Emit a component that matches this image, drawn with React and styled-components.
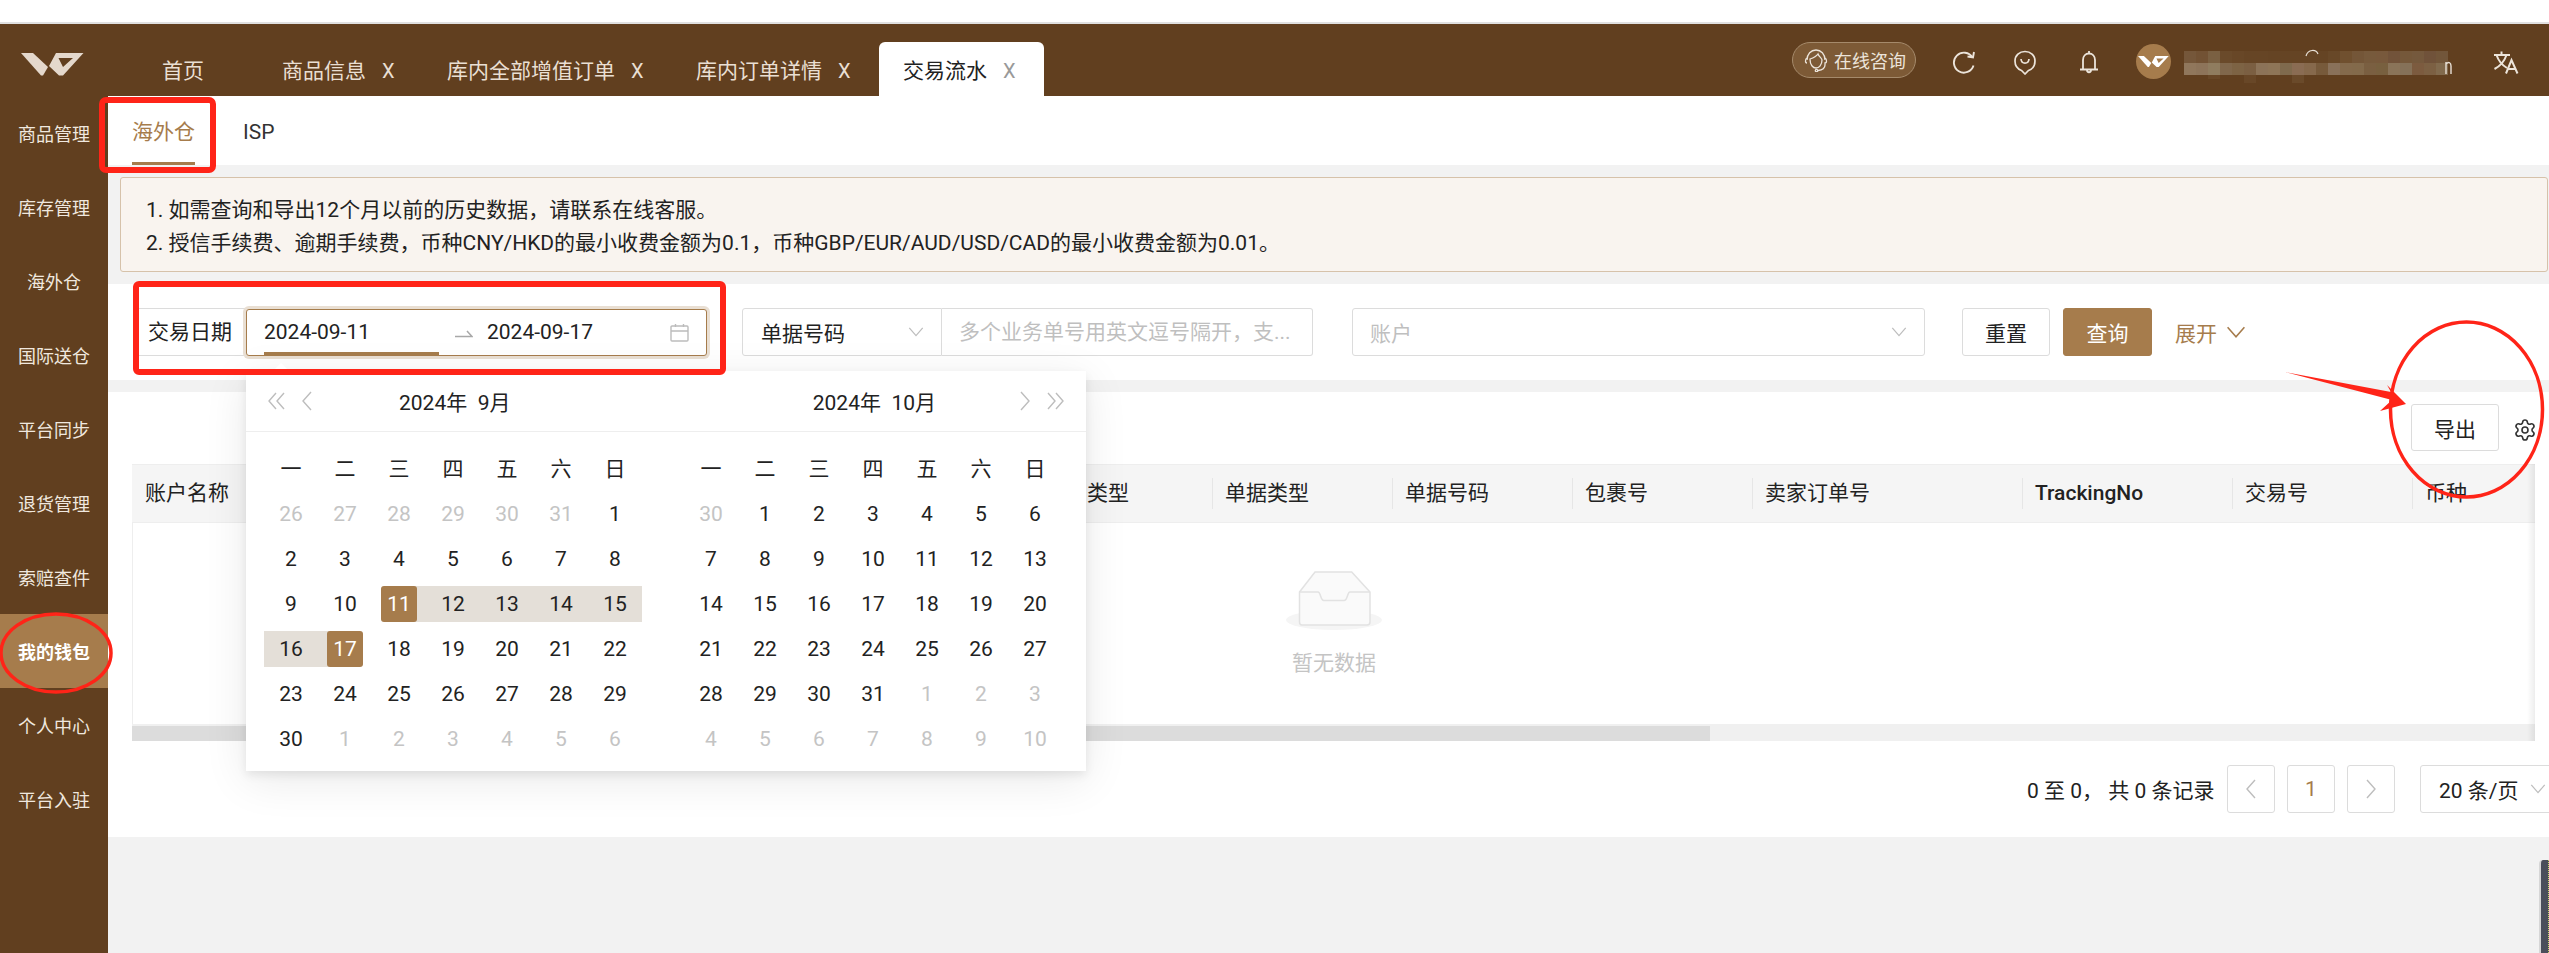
import React from 'react';
import styled, { createGlobalStyle } from 'styled-components';
import { Settings } from 'lucide-react';

const BROWN = '#613f1f';
const ACCENT = '#a67c4c';
const ICON = '#ece4da';
const FONT = 'Roboto, "Noto Sans CJK SC", sans-serif';

const GlobalStyle = createGlobalStyle`
    html, body { margin: 0; padding: 0; background: #fff; }
    * { box-sizing: border-box; }
    body { font-family: ${FONT}; font-size: 21px; color: #222; }
`;

const TABS = [
    { name: '首页', home: true },
    { name: '商品信息' },
    { name: '库内全部增值订单' },
    { name: '库内订单详情' },
    { name: '交易流水', active: true },
];

const MENU = ['商品管理', '库存管理', '海外仓', '国际送仓', '平台同步', '退货管理', '索赔查件', '我的钱包', '个人中心', '平台入驻'];

const COLUMNS = [
    { name: '账户名称', w: 180 }, { name: '交易时间', w: 180 }, { name: '交易金额', w: 180 },
    { name: '账户余额', w: 180 }, { name: '收支类型', w: 180 }, { name: '交易类型', w: 180 },
    { name: '单据类型', w: 180 }, { name: '单据号码', w: 180 }, { name: '包裹号', w: 180 },
    { name: '卖家订单号', w: 270 }, { name: 'TrackingNo', w: 210, strong: true },
    { name: '交易号', w: 180 }, { name: '币种', w: 123 },
];

const WEEK = ['一', '二', '三', '四', '五', '六', '日'];

// [日期, 是否灰色]
const range = (from, to, off) => Array.from({ length: to - from + 1 }, (_, i) => [from + i, off]);

const SEP_DAYS = [...range(26, 31, true), ...range(1, 30, false), ...range(1, 6, true)];
const OCT_DAYS = [...range(30, 30, true), ...range(1, 31, false), ...range(1, 10, true)];

const MOSAIC_LOW = ['#90775c', '#8d745a', '#8f7c5f', '#80674b', '#7d6344', '#7b5f42', '#8c7358', '#8e7557', '#7f6a4d', '#8a6c53', '#86694c', '#775a3b', '#89715a', '#846a4c', '#836a4b', '#7a5f41', '#78603f', '#8a7459', '#857158', '#7c5b3f', '#7c6043', '#816a4d'];
const MOSAIC_HIGH = ['#75573a', '#725234', '#7a6042', '#6a4a2a', '#684727', '#664525', '#664525', '#654424', '#654424', '#654424', '#654424', '#654424', '#684828', '#70502f', '#745638', '#775a3c', '#78593c', '#72533a', '#75583a', '#75593d', '#70523a', '#72563a'];

const Logo = ({ size = 63, color = '#e4d8cc' }) => (
    <svg width={size} height={size * 23 / 63} viewBox="0 0 63 23" fill={color}>
        <path d="M0 0H12L27 14L22 22.5H20Z" />
        <path fillRule="evenodd" d="M35 0H62.5L42 22.5H38L28 13ZM37.5 5H52L42 14Z" />
    </svg>
);

const Chevron = ({ color = '#bdbdbd', w = 16 }) => (
    <svg width={w} height={w * 0.6} viewBox="0 0 16 10" fill="none" stroke={color} strokeWidth="1.3">
        <path d="M1 1L8 9L15 1" />
    </svg>
);

const PagerArrow = ({ left }) => (
    <svg width="12" height="20" viewBox="0 0 12 20" fill="none" stroke="#bdbdbd" strokeWidth="1.4">
        <path d={left ? 'M10 1L2 10L10 19' : 'M2 1L10 10L2 19'} />
    </svg>
);

const DoubleArrow = ({ left }) => (
    <svg width="19" height="20" viewBox="0 0 19 20" fill="none" stroke="#bdbdbd" strokeWidth="1.4">
        <path d={left ? 'M9 2L2 10L9 18M17 2L10 10L17 18' : 'M2 2L9 10L2 18M10 2L17 10L10 18'} />
    </svg>
);

const CalendarIcon = () => (
    <svg width="19" height="19" viewBox="0 0 19 19" fill="none" stroke="#bcbcbc" strokeWidth="1.4">
        <rect x="1" y="3" width="17" height="15" rx="1" />
        <path d="M1 8H18M5.5 1V4M13.5 1V4" />
    </svg>
);

const SwapArrow = () => (
    <svg width="18" height="10" viewBox="0 0 18 10" fill="none" stroke="#a8a8a8" strokeWidth="1.5">
        <path d="M0 8.5H17L12 3" />
    </svg>
);

const HeadsetIcon = () => (
    <svg width="24" height="24" viewBox="0 0 24 24" fill="none" stroke={ICON} strokeWidth="1.3">
        <path d="M3 12C3 6 7 2 12 2S21 6 21 12" />
        <path d="M6 11C9 10 12 9 14 6C15 9 18 10 18 12C18 17 15 20 12 20S6 17 6 11Z" />
        <path d="M3 10C1 11 1 15 3 15M21 10C23 11 23 15 21 15V17C21 20 18 22 14 22.5" />
        <circle cx="12.5" cy="22.5" r="1.2" />
    </svg>
);

const RefreshIcon = () => (
    <svg width="24" height="24" viewBox="0 0 24 24" fill="none" stroke={ICON} strokeWidth="1.9">
        <path d="M20.5 7.5A10 10 0 1 0 21.5 15.5" />
        <path d="M15.5 6.5L21 7.5L22 2" />
    </svg>
);

const PinIcon = () => (
    <svg width="22" height="25" viewBox="0 0 22 25" fill="none" stroke={ICON} strokeWidth="1.7">
        <path d="M11 24L7.5 20.5C3.5 19 1 15.5 1 11C1 5.5 5.5 1.5 11 1.5S21 5.5 21 11C21 15.5 18.5 19 14.5 20.5Z" />
        <path d="M7 9C7.5 14.5 14.5 14.5 15 9" />
    </svg>
);

const BellIcon = () => (
    <svg width="20" height="24" viewBox="0 0 20 24" fill="none" stroke={ICON} strokeWidth="1.8">
        <path d="M4 19V10C4 6 6.5 3.5 10 3.5S16 6 16 10V19" />
        <path d="M1 19.5H19M10 1V3.5M8 20C8 23 12 23 12 20" />
    </svg>
);

const TranslateIcon = () => (
    <svg width="26" height="24" viewBox="0 0 26 24" fill="none" stroke={ICON} strokeWidth="2">
        <path d="M1 5H17M8.5 1.5V5" />
        <path d="M3.5 5C5.5 11 9 15 14 18M13.5 5C11.5 11 8 15.5 1.5 19" />
        <path d="M13 23.5L18.5 10L24.5 23.5M15 19H22.5" />
    </svg>
);

const EmptyIcon = () => (
    <svg width="97" height="60" viewBox="0 0 97 60">
        <ellipse cx="48" cy="50" rx="48" ry="10" fill="#f5f5f5" />
        <path d="M13.5 22L29 2H65.7L84 22V52C84 54 83 55 81 55H16C14 55 13.5 54 13.5 52Z" fill="#fafafa" stroke="#e2e2e2" strokeWidth="1.5" />
        <path d="M13.5 22H32C35 22 34 30.5 38 30.5H58C62 30.5 61 22 64 22H84" fill="none" stroke="#e2e2e2" strokeWidth="1.5" />
    </svg>
);

const BlurredName = () => (
    <svg width="268" height="36" viewBox="0 0 268 36">
        {MOSAIC_HIGH.map((c, i) => <rect key={i} x={i * 12} y="3" width="12" height="12" fill={c} />)}
        {MOSAIC_LOW.map((c, i) => <rect key={i} x={i * 12} y="15" width="12" height="12" fill={c} />)}
        <rect x="24" y="27" width="12" height="4" fill="#684727" />
        <rect x="60" y="27" width="12" height="8" fill="#684727" />
        <rect x="108" y="27" width="12" height="8" fill="#6a4a2a" />
        <path d="M122 8C124 1 132 1 134 6" fill="none" stroke="#e8e0d6" strokeWidth="1.2" />
        <path d="M262 14V26M262 16C265 13 267 15 267 18V26" fill="none" stroke="#e8e0d6" strokeWidth="1.4" />
    </svg>
);

const CalendarPanel = ({ days, selected }) => (
    <PanelBody>
        <WeekRow>
            {WEEK.map(w => <WeekCell key={w}>{w}</WeekCell>)}
        </WeekRow>
        <DayGrid>
            {days.map(([d, off], i) => {
                const sel = selected && !off ? selected[d] : undefined;
                return (
                    <DayCell key={i} $fill={sel && sel.fill}>
                        <DayNum $off={off} $on={sel && sel.on}>{d}</DayNum>
                    </DayCell>
                );
            })}
        </DayGrid>
    </PanelBody>
);

const SEP_SELECTED = {
    11: { on: true, fill: 'right' },
    12: { fill: 'all' }, 13: { fill: 'all' }, 14: { fill: 'all' }, 15: { fill: 'all' }, 16: { fill: 'all' },
    17: { on: true, fill: 'left' },
};

const App = () => {
    return (
        <Page>
            <GlobalStyle />
            <TopStrip />
            <Header>
                <LogoCell><Logo /></LogoCell>
                <TabBar>
                    {TABS.map(t => (
                        <Tab key={t.name} $active={t.active} $home={t.home}>
                            {t.name}
                            {!t.home && <TabClose $active={t.active}>X</TabClose>}
                        </Tab>
                    ))}
                </TabBar>
                <Tools>
                    <Consult><HeadsetIcon />在线咨询</Consult>
                    <ToolIcon $w={24} $left={36}><RefreshIcon /></ToolIcon>
                    <ToolIcon $w={22} $left={38}><PinIcon /></ToolIcon>
                    <ToolIcon $w={20} $left={43}><BellIcon /></ToolIcon>
                    <Avatar><Logo size={31} color="#fff" /></Avatar>
                    <UserName><BlurredName /></UserName>
                    <ToolIcon $w={26} $left={41}><TranslateIcon /></ToolIcon>
                </Tools>
            </Header>
            <Body>
                <Sidebar>
                    {MENU.map(m => <MenuItem key={m} $active={m === '我的钱包'}>{m}</MenuItem>)}
                </Sidebar>
                <Main>
                    <SubTabs>
                        <SubTab $active>海外仓</SubTab>
                        <SubTab>ISP</SubTab>
                    </SubTabs>
                    <Notice>
                        <div>1. 如需查询和导出12个月以前的历史数据，请联系在线客服。</div>
                        <div>2. 授信手续费、逾期手续费，币种CNY/HKD的最小收费金额为0.1，币种GBP/EUR/AUD/USD/CAD的最小收费金额为0.01。</div>
                    </Notice>
                    <FilterPanel>
                        <DateGroup>
                            <DateLabel>交易日期</DateLabel>
                            <DatePicker>
                                <DateValue $active>2024-09-11</DateValue>
                                <DateArrow><SwapArrow /></DateArrow>
                                <DateValue>2024-09-17</DateValue>
                                <CalendarIcon />
                            </DatePicker>
                        </DateGroup>
                        <BillGroup>
                            <BillSelect>单据号码<Chevron /></BillSelect>
                            <BillInput>多个业务单号用英文逗号隔开，支...</BillInput>
                        </BillGroup>
                        <AccountSelect>账户<Chevron /></AccountSelect>
                        <Button>重置</Button>
                        <Button $primary>查询</Button>
                        <Expand>展开<Chevron color={ACCENT} w={20} /></Expand>
                        <Popup>
                            <PopupPanel>
                                <PanelHead>
                                    <HeadArrows>
                                        <DoubleArrow left />
                                        <PagerArrow left />
                                    </HeadArrows>
                                    <MonthTitle $left={86}>2024年&nbsp;&nbsp;9月</MonthTitle>
                                </PanelHead>
                                <CalendarPanel days={SEP_DAYS} selected={SEP_SELECTED} />
                            </PopupPanel>
                            <PopupPanel>
                                <PanelHead $end>
                                    <MonthTitle $right={83}>2024年&nbsp;&nbsp;10月</MonthTitle>
                                    <HeadArrows>
                                        <PagerArrow />
                                        <DoubleArrow />
                                    </HeadArrows>
                                </PanelHead>
                                <CalendarPanel days={OCT_DAYS} />
                            </PopupPanel>
                        </Popup>
                    </FilterPanel>
                    <TablePanel>
                        <TableTools>
                            <ExportButton>导出</ExportButton>
                            <Settings size={24} strokeWidth={1.6} color="#333" />
                        </TableTools>
                        <TableWrap>
                            <HeadRow>
                                {COLUMNS.map(c => (
                                    <HeadCell key={c.name} $w={c.w} $strong={c.strong}>{c.name}</HeadCell>
                                ))}
                            </HeadRow>
                            <EmptyBody>
                                <EmptyIcon />
                                <EmptyText>暂无数据</EmptyText>
                            </EmptyBody>
                            <ScrollTrack><ScrollThumb /></ScrollTrack>
                        </TableWrap>
                        <Pager>
                            <PagerInfo>0 至 0， 共 0 条记录</PagerInfo>
                            <PagerBtn><PagerArrow left /></PagerBtn>
                            <PagerBtn $current>1</PagerBtn>
                            <PagerBtn><PagerArrow /></PagerBtn>
                            <PageSize>20 条/页<Chevron /></PageSize>
                        </Pager>
                    </TablePanel>
                </Main>
            </Body>
            <DockEdge />
            <Marks width="2549" height="953" viewBox="0 0 2549 953" fill="none" stroke="#ff2418">
                <rect x="102" y="100" width="111" height="70" rx="4" strokeWidth="6" />
                <rect x="136" y="284" width="587" height="88" rx="3" strokeWidth="6" />
                <ellipse cx="56" cy="653" rx="55" ry="39" strokeWidth="3.5" />
                <ellipse cx="2466.5" cy="409.5" rx="76" ry="87.5" strokeWidth="3.5" />
                <polygon points="2285,372 2391,392 2387,385 2406,404 2380,411 2392,400" fill="#ff2418" stroke="none" />
            </Marks>
        </Page>
    );
};

export default App;

const Page = styled.div`
    position: relative;
    width: 2549px;
    height: 953px;
    overflow: hidden;
    display: flex;
    flex-direction: column;
    background: #f2f2f2;
`;

const TopStrip = styled.div`
    height: 24px;
    flex: none;
    background: #fff;
    border-bottom: 2px solid #e0e0e0;
`;

const Header = styled.header`
    height: 72px;
    flex: none;
    display: flex;
    background: ${BROWN};
`;

const LogoCell = styled.div`
    width: 108px;
    flex: none;
    padding: 29px 0 0 21px;
`;

const TabBar = styled.nav`
    display: flex;
    align-items: flex-end;
    margin-left: 30px;
`;

const Tab = styled.div`
    height: 54px;
    display: flex;
    align-items: center;
    gap: 16px;
    padding: ${p => (p.$home ? '0 54px 0 24px' : '0 28px 0 24px')};
    color: ${p => (p.$active ? '#222' : '#eadfd3')};
    background: ${p => (p.$active ? '#fff' : 'transparent')};
    border-radius: 6px 6px 0 0;
    white-space: nowrap;
`;

const TabClose = styled.span`
    font-size: 20px;
    width: 13px;
    margin-top: 4px;
    color: ${p => (p.$active ? '#999' : '#eadfd3')};
`;

const Tools = styled.div`
    margin-left: auto;
    padding: 18px 0 0 0;
    display: flex;
    align-items: flex-start;
    width: 757px;
`;

const Consult = styled.div`
    width: 124px;
    height: 36px;
    display: flex;
    align-items: center;
    gap: 6px;
    padding-left: 11px;
    border: 1px solid #a58a6b;
    border-radius: 18px;
    background: #7d5a36;
    color: ${ICON};
    font-size: 18px;
    white-space: nowrap;
`;

const ToolIcon = styled.div`
    width: ${p => p.$w}px;
    margin: 8px 0 0 ${p => p.$left || 36}px;
    display: flex;
    justify-content: center;
    flex: none;
`;

const Avatar = styled.div`
    width: 35px;
    height: 35px;
    margin: 2px 0 0 37px;
    flex: none;
    display: flex;
    align-items: center;
    justify-content: center;
    border-radius: 50%;
    background: ${ACCENT};
`;

const UserName = styled.div`
    margin: 6px 0 0 13px;
    width: 268px;
    height: 36px;
    flex: none;
`;

const Body = styled.div`
    flex: 1;
    min-height: 0;
    display: flex;
`;

const Sidebar = styled.aside`
    width: 108px;
    flex: none;
    background: ${BROWN};
`;

const MenuItem = styled.div`
    height: 74px;
    display: flex;
    align-items: center;
    justify-content: center;
    font-size: 18px;
    font-weight: ${p => (p.$active ? 700 : 400)};
    color: ${p => (p.$active ? '#fff' : '#f0e8df')};
    background: ${p => (p.$active ? ACCENT : 'transparent')};
`;

const Main = styled.main`
    flex: 1;
    min-width: 0;
`;

const SubTabs = styled.div`
    height: 69px;
    display: flex;
    gap: 48px;
    padding-left: 24px;
    background: #fff;
`;

const SubTab = styled.div`
    height: 69px;
    padding-top: 21px;
    line-height: 30px;
    font-size: 21px;
    color: ${p => (p.$active ? ACCENT : '#333')};
    border-bottom: 3px solid ${p => (p.$active ? ACCENT : 'transparent')};
`;

const Notice = styled.div`
    height: 95px;
    margin: 12px 1px 12px 12px;
    padding: 16px 25px 0;
    background: #f9f4ef;
    border: 1px solid #d6c2aa;
    border-radius: 3px;
    line-height: 33px;
    font-size: 21px;
    white-space: nowrap;
`;

const FilterPanel = styled.section`
    position: relative;
    height: 96px;
    display: flex;
    align-items: flex-start;
    padding: 24px 0 0 26px;
    background: #fff;
    z-index: 2;
`;

const DateGroup = styled.div`
    display: flex;
    height: 48px;
    flex: none;
`;

const DateLabel = styled.div`
    width: 112px;
    padding-left: 13px;
    line-height: 46px;
    border: 1px solid #dcdcdc;
    border-right: none;
    border-radius: 3px 0 0 3px;
`;

const DatePicker = styled.div`
    width: 461px;
    height: 47px;
    margin-top: 1px;
    display: flex;
    align-items: center;
    padding: 0 0 0 17px;
    background: #fff;
    border: 1px solid ${ACCENT};
    border-radius: 3px;
    box-shadow: 0 0 0 3px #e9dfd3;

    & > svg {
        margin-left: 8px;
    }
`;

const DateValue = styled.div`
    width: 175px;
    height: 45px;
    line-height: 45px;
    flex: none;
    ${p => p.$active && `border-bottom: 3px solid ${ACCENT};`}
`;

const DateArrow = styled.div`
    width: 48px;
    flex: none;
    display: flex;
    padding-left: 16px;
`;

const BillGroup = styled.div`
    display: flex;
    height: 48px;
    margin-left: 35px;
    flex: none;
`;

const BillSelect = styled.div`
    width: 200px;
    display: flex;
    align-items: center;
    justify-content: space-between;
    padding: 0 17px 0 18px;
    border: 1px solid #dcdcdc;
    border-radius: 3px 0 0 3px;
`;

const BillInput = styled.div`
    width: 371px;
    padding-left: 17px;
    line-height: 46px;
    color: #bfbfbf;
    border: 1px solid #dcdcdc;
    border-left: none;
    border-radius: 0 3px 3px 0;
    white-space: nowrap;
`;

const AccountSelect = styled.div`
    width: 573px;
    height: 48px;
    margin-left: 39px;
    flex: none;
    display: flex;
    align-items: center;
    justify-content: space-between;
    padding: 0 17px;
    color: #bfbfbf;
    border: 1px solid #dcdcdc;
    border-radius: 3px;
`;

const Button = styled.button`
    width: ${p => (p.$primary ? 89 : 88)}px;
    height: 48px;
    margin-left: ${p => (p.$primary ? 13 : 37)}px;
    padding: 0;
    flex: none;
    font: inherit;
    color: ${p => (p.$primary ? '#fff' : '#222')};
    background: ${p => (p.$primary ? ACCENT : '#fff')};
    border: 1px solid ${p => (p.$primary ? ACCENT : '#dcdcdc')};
    border-radius: 3px;
`;

const Expand = styled.div`
    margin-left: 23px;
    height: 48px;
    display: flex;
    align-items: center;
    gap: 9px;
    color: ${ACCENT};
`;

const Popup = styled.div`
    position: absolute;
    left: 138px;
    top: 87px;
    width: 840px;
    height: 400px;
    display: flex;
    background: #fff;
    box-shadow: 0 9px 42px rgba(0, 0, 0, 0.09), 0 4px 9px rgba(0, 0, 0, 0.08);

    &::before {
        content: '';
        position: absolute;
        left: 27px;
        top: -8px;
        border: 8px solid transparent;
        border-top: none;
        border-bottom-color: #fff;
    }
`;

const PopupPanel = styled.div`
    width: 420px;
`;

const PanelHead = styled.div`
    height: 61px;
    display: flex;
    align-items: center;
    justify-content: ${p => (p.$end ? 'flex-end' : 'flex-start')};
    padding: ${p => (p.$end ? '0 21px 0 0' : '0 0 0 21px')};
    border-bottom: 1px solid #eee;
`;

const HeadArrows = styled.div`
    display: flex;
    align-items: center;
    gap: 15px;
`;

const MonthTitle = styled.div`
    margin: 0 ${p => p.$right || 0}px 0 ${p => p.$left || 0}px;
    white-space: nowrap;
`;

const PanelBody = styled.div`
    padding: 19px 24px 0 18px;
`;

const WeekRow = styled.div`
    display: grid;
    grid-template-columns: repeat(7, 54px);
    height: 36px;
    margin-bottom: 9px;
`;

const WeekCell = styled.div`
    text-align: center;
    line-height: 36px;
`;

const DayGrid = styled.div`
    display: grid;
    grid-template-columns: repeat(7, 54px);
    grid-auto-rows: 36px;
    row-gap: 9px;
`;

const fillOf = {
    all: '#e4dfd8',
    right: 'linear-gradient(90deg, transparent 50%, #e4dfd8 50%)',
    left: 'linear-gradient(90deg, #e4dfd8 50%, transparent 50%)',
};

const DayCell = styled.div`
    display: flex;
    justify-content: center;
    background: ${p => (p.$fill ? fillOf[p.$fill] : 'transparent')};
`;

const DayNum = styled.div`
    width: 36px;
    height: 36px;
    line-height: 36px;
    text-align: center;
    border-radius: 3px;
    color: ${p => (p.$on ? '#fff' : p.$off ? '#c4c4c4' : '#222')};
    background: ${p => (p.$on ? ACCENT : 'transparent')};
`;

const TablePanel = styled.section`
    height: 445px;
    margin-top: 12px;
    padding-left: 24px;
    background: #fff;
    overflow: hidden;
`;

const TableTools = styled.div`
    height: 72px;
    width: 2405px;
    padding-top: 12px;
    display: flex;
    align-items: flex-start;
    justify-content: flex-end;
    gap: 14px;

    svg {
        margin: 14px 0 0 0;
    }
`;

const ExportButton = styled.button`
    width: 88px;
    height: 47px;
    padding: 0;
    font: inherit;
    color: #222;
    background: #fff;
    border: 1px solid #dcdcdc;
    border-radius: 3px;
`;

const TableWrap = styled.div`
    position: relative;
    width: 2403px;
    overflow: hidden;

    &::after {
        content: '';
        position: absolute;
        top: 0;
        bottom: 0;
        right: 0;
        width: 8px;
        background: linear-gradient(90deg, rgba(0, 0, 0, 0), rgba(0, 0, 0, 0.07));
    }
`;

const HeadRow = styled.div`
    display: flex;
    height: 59px;
    background: #f5f5f5;
    border-top: 1px solid #eee;
    border-bottom: 1px solid #eee;
`;

const HeadCell = styled.div`
    position: relative;
    width: ${p => p.$w}px;
    flex: none;
    padding-left: 13px;
    line-height: 57px;
    font-weight: ${p => (p.$strong ? 500 : 400)};
    white-space: nowrap;

    &:not(:first-child)::before {
        content: '';
        position: absolute;
        left: 0;
        top: 13px;
        bottom: 13px;
        width: 1px;
        background: #e6e6e6;
    }
`;

const EmptyBody = styled.div`
    height: 201px;
    display: flex;
    flex-direction: column;
    align-items: center;
    padding-top: 47px;
    border-left: 1px solid #eee;
`;

const EmptyText = styled.div`
    margin-top: 16px;
    color: #c4c4c4;
`;

const ScrollTrack = styled.div`
    height: 17px;
    padding-top: 2px;
    background: #f0f0f0;
`;

const ScrollThumb = styled.div`
    width: 1578px;
    height: 15px;
    background: #dcdcdc;
`;

const Pager = styled.div`
    height: 48px;
    margin-top: 24px;
    display: flex;
    align-items: center;
    padding-left: 1895px;
`;

const PagerInfo = styled.div`
    width: 200px;
    flex: none;
    white-space: nowrap;
`;

const PagerBtn = styled.div`
    width: 48px;
    height: 48px;
    flex: none;
    margin-right: 12px;
    display: flex;
    align-items: center;
    justify-content: center;
    color: ${ACCENT};
    border: 1px solid #dcdcdc;
    border-radius: 3px;
`;

const PageSize = styled.div`
    width: 136px;
    height: 48px;
    flex: none;
    margin-left: 13px;
    display: flex;
    align-items: center;
    gap: 12px;
    padding-left: 18px;
    border: 1px solid #dcdcdc;
    border-radius: 3px;
    white-space: nowrap;
`;

const DockEdge = styled.div`
    position: absolute;
    right: 0;
    top: 860px;
    bottom: 0;
    width: 10px;
    background: #4a4e5a;
    border-left: 2px solid #d6d6d6;
    border-right: 1px dotted #c9d66a;
    border-top-left-radius: 4px;
`;

const Marks = styled.svg`
    position: absolute;
    left: 0;
    top: 0;
    z-index: 5;
    pointer-events: none;
`;
